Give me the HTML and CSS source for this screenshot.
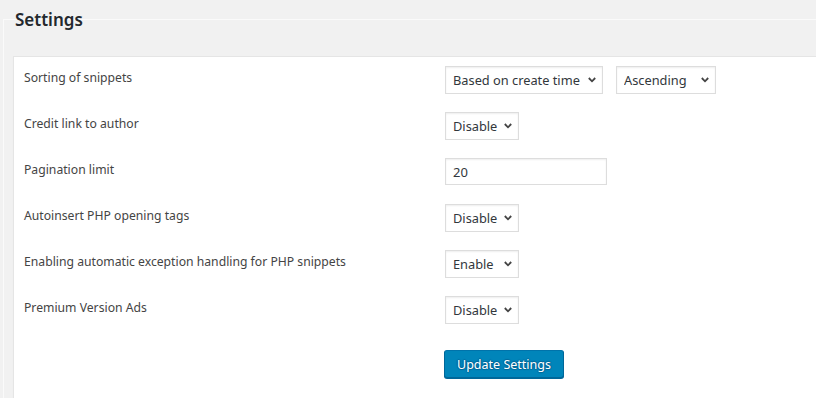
FILE: index.html
```html
<!DOCTYPE html>
<html>
<head>
<meta charset="utf-8">
<link rel="stylesheet" href="styles.css">
</head>
<body>
<div class="frame">
  <h1 class="title">Settings</h1>
  <div class="panel">
    <div class="row">
      <div class="label">Sorting of snippets</div>
      <div class="controls">
        <select class="sel w-create"><option>Based on create time</option></select>
        <select class="sel w-asc"><option>Ascending</option></select>
      </div>
    </div>
    <div class="row">
      <div class="label">Credit link to author</div>
      <div class="controls"><select class="sel w-small"><option>Disable</option></select></div>
    </div>
    <div class="row">
      <div class="label">Pagination limit</div>
      <div class="controls"><input class="txt" type="text" value="20"></div>
    </div>
    <div class="row">
      <div class="label">Autoinsert PHP opening tags</div>
      <div class="controls"><select class="sel w-small"><option>Disable</option></select></div>
    </div>
    <div class="row">
      <div class="label">Enabling automatic exception handling for PHP snippets</div>
      <div class="controls"><select class="sel w-small"><option>Enable</option></select></div>
    </div>
    <div class="row">
      <div class="label">Premium Version Ads</div>
      <div class="controls"><select class="sel w-small"><option>Disable</option></select></div>
    </div>
    <div class="row submit-row">
      <div class="label"></div>
      <div class="controls"><button class="btn" type="button">Update Settings</button></div>
    </div>
  </div>
</div>
</body>
</html>
```
FILE: styles.css
```css
html, body {
  margin: 0;
  padding: 0;
  background: #f1f1f1;
  font-family: "Noto Sans", "Open Sans", sans-serif;
  color: #444;
  overflow: hidden;
}
.frame {
  margin: 19px 0 0 3px;
  border-top: 1px solid #fafafa;
  border-left: 1px solid #fafafa;
  padding-left: 9px;
}
.title {
  margin: -12px 0 24px 2px;
  font-size: 17px;
  line-height: 24px;
  font-weight: 600;
  color: #23282d;
}
.panel {
  background: #fff;
  border: 1px solid #e5e5e5;
  border-right: none;
  border-bottom: none;
  box-shadow: 0 1px 1px rgba(0,0,0,.04);
  height: 341px;
}
.row {
  display: flex;
  align-items: flex-start;
  height: 46px;
  box-sizing: border-box;
  padding-top: 9px;
}
.label {
  width: 421px;
  padding-left: 10px;
  padding-top: 3px;
  font-size: 12.2px;
  line-height: 18px;
  color: #444;
  flex: none;
}
.controls {
  display: flex;
  gap: 13px;
}
.sel {
  -webkit-appearance: none;
  appearance: none;
  height: 28px;
  box-sizing: border-box;
  border: 1px solid #ddd;
  border-radius: 0;
  box-shadow: inset 0 1px 2px rgba(0,0,0,.07);
  background: #fff url("data:image/svg+xml;utf8,<svg xmlns='http://www.w3.org/2000/svg' width='8' height='6' viewBox='0 0 8 6'><path d='M0.8 1 L4 4.3 L7.2 1' fill='none' stroke='%23444' stroke-width='1.8'/></svg>") no-repeat right 6px center;
  padding: 0 14px 0 7px;
  font-family: "Noto Sans", "Open Sans", sans-serif;
  font-size: 12.8px;
  color: #32373c;
  outline: none;
}
.w-create { width: 158px; }
.w-asc { width: 100px; }
.w-small { width: 74px; }
.txt {
  width: 162px;
  height: 27px;
  box-sizing: border-box;
  border: 1px solid #ddd;
  box-shadow: inset 0 1px 2px rgba(0,0,0,.07);
  padding: 0 7px;
  font-family: "Noto Sans", "Open Sans", sans-serif;
  font-size: 13px;
  color: #32373c;
  outline: none;
}
.submit-row {
  padding-top: 17px;
}
.submit-row .controls {
  margin-left: -1px;
}
.btn {
  width: 120px;
  height: 28px;
  box-sizing: border-box;
  background: #0085ba;
  border: 1px solid #006799;
  border-top-color: #0073aa;
  border-radius: 3px;
  box-shadow: 0 1px 0 #006799;
  color: #fff;
  font-family: "Noto Sans", "Open Sans", sans-serif;
  font-size: 12.5px;
  padding: 0 10px;
  text-shadow: 0 -1px 1px #006799, 1px 0 1px #006799, 0 1px 1px #006799, -1px 0 1px #006799;
}
```
